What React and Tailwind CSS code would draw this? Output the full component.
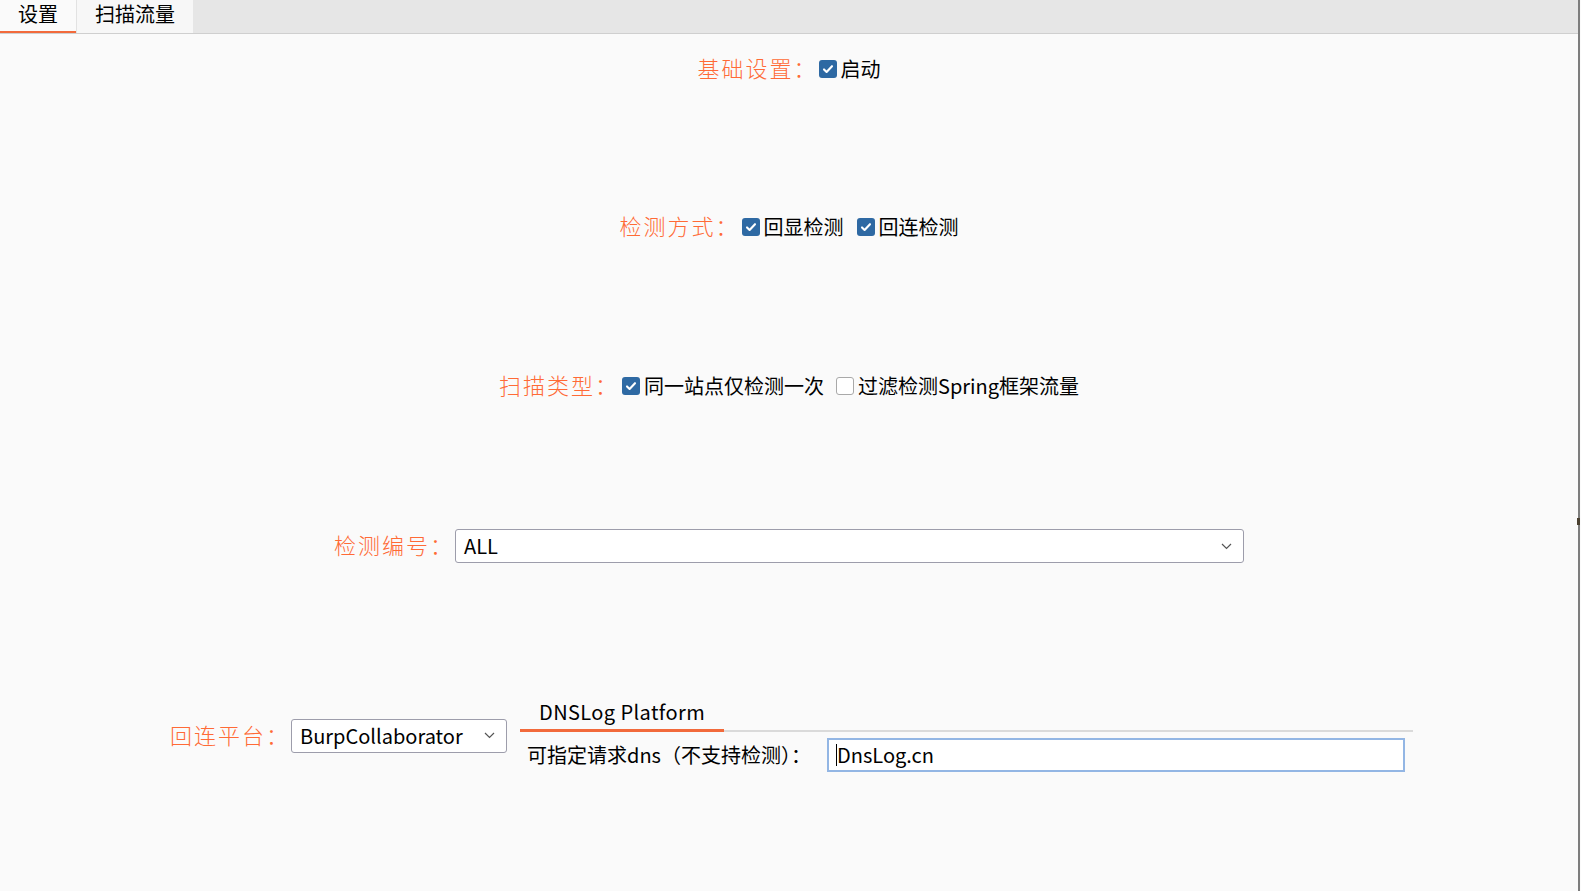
import React from 'react';

const font = { fontFamily: '"Noto Sans CJK SC", "Noto Sans", sans-serif' };

const Label = ({ children }) => (
    <span className="w-[120px] shrink-0 mb-[4px] text-[22px] leading-none tracking-[2px] font-light text-[#ff6a36] whitespace-nowrap">
        {children}
    </span>
);

const Box = ({ checked }) =>
    checked ? (
        <span className="w-[18px] h-[18px] shrink-0 rounded-[3px] bg-[#2e69a3] flex items-center justify-center">
            <svg width="14" height="14" viewBox="0 0 14 14">
                <path d="M3 7.4l2.6 2.6L11 4.2" stroke="#fff" strokeWidth="2.1" fill="none" strokeLinecap="round" strokeLinejoin="round" />
            </svg>
        </span>
    ) : (
        <span className="w-[18px] h-[18px] shrink-0 rounded-[3px] border border-[#a9a9a9] bg-white" />
    );

const CheckItem = ({ checked, text, className = '' }) => (
    <span className={`flex items-center gap-[4px] ${className}`}>
        <Box checked={checked} />
        <span className="text-[20px] leading-none text-black whitespace-nowrap">{text}</span>
    </span>
);

const Chevron = () => (
    <svg width="11" height="7" viewBox="0 0 11 7">
        <path d="M1 1l4.5 4.5L10 1" stroke="#555" strokeWidth="1.2" fill="none" />
    </svg>
);

const Combo = ({ value, className }) => (
    <div className={`h-[34px] bg-white border border-[#9d9dab] rounded-[3px] flex items-center justify-between pl-[8px] pr-[11px] ${className}`}>
        <span className="text-[20px] leading-none text-black">{value}</span>
        <Chevron />
    </div>
);

const App = () => {
    return (
        <div className="w-[1581px] h-[891px] bg-[#fafafa] flex overflow-hidden" style={font}>
            <div className="w-[1578px] flex flex-col">
                {/* tab bar */}
                <div className="h-[34px] shrink-0 bg-[#e6e6e6] border-b border-[#cfcfcf] flex">
                    <div className="w-[76px] h-[33px] bg-[#fafafa] border-b-2 border-[#f26a3b] flex justify-center items-start">
                        <span className="text-[20px] leading-[27px] text-black">设置</span>
                    </div>
                    <div className="w-[117px] h-[33px] bg-[#f7f7f7] border-l border-[#e2e2e2] flex justify-center items-start">
                        <span className="text-[20px] leading-[27px] text-black">扫描流量</span>
                    </div>
                </div>

                {/* settings rows */}
                <div className="flex flex-col">
                    <div className="h-[40px] mt-[15px] flex items-center justify-center">
                        <Label>基础设置：</Label>
                        <CheckItem checked text="启动" className="ml-[1px]" />
                    </div>

                    <div className="h-[40px] mt-[118px] flex items-center justify-center">
                        <Label>检测方式：</Label>
                        <CheckItem checked text="回显检测" className="ml-[2px]" />
                        <CheckItem checked text="回连检测" className="ml-[13px]" />
                    </div>

                    <div className="h-[40px] mt-[119px] flex items-center justify-center">
                        <Label>扫描类型：</Label>
                        <CheckItem checked text="同一站点仅检测一次" className="ml-[3px]" />
                        <CheckItem text="过滤检测Spring框架流量" className="ml-[12px]" />
                    </div>

                    <div className="h-[40px] mt-[120px] flex items-center justify-center">
                        <Label>检测编号：</Label>
                        <Combo value="ALL" className="w-[789px] ml-[1px]" />
                    </div>

                    <div className="mt-[128px] pl-[5px] flex items-center justify-center">
                        <Label>回连平台：</Label>
                        <Combo value="BurpCollaborator" className="w-[216px] ml-[1px]" />
                        <div className="w-[893px] ml-[13px] flex flex-col">
                            <div className="flex border-b-2 border-[#dadada]">
                                <div className="h-[38px] -mb-[2px] px-[19px] border-b-[3px] border-[#f26a3b] flex items-center">
                                    <span className="text-[20px] leading-none tracking-[0.4px] text-black">DNSLog Platform</span>
                                </div>
                            </div>
                            <div className="flex items-center pl-[7px] pr-[8px] pt-[6px] pb-[5px]">
                                <span className="flex-1 text-[20px] leading-none text-black whitespace-nowrap">可指定请求dns（不支持检测）：</span>
                                <div className="w-[578px] h-[34px] bg-white border-2 border-[#93b6e4] flex items-center pl-[7px]">
                                    <span className="w-px h-[22px] bg-black" />
                                    <span className="text-[20px] leading-none text-black">DnsLog.cn</span>
                                </div>
                            </div>
                        </div>
                    </div>
                </div>
            </div>
            <div className="w-[2px] h-full bg-[#7d7d7d] relative">
                <span className="absolute top-[518px] -left-px w-[3px] h-[7px] bg-[#4a4030]" />
            </div>
        </div>
    );
};

export default App;
